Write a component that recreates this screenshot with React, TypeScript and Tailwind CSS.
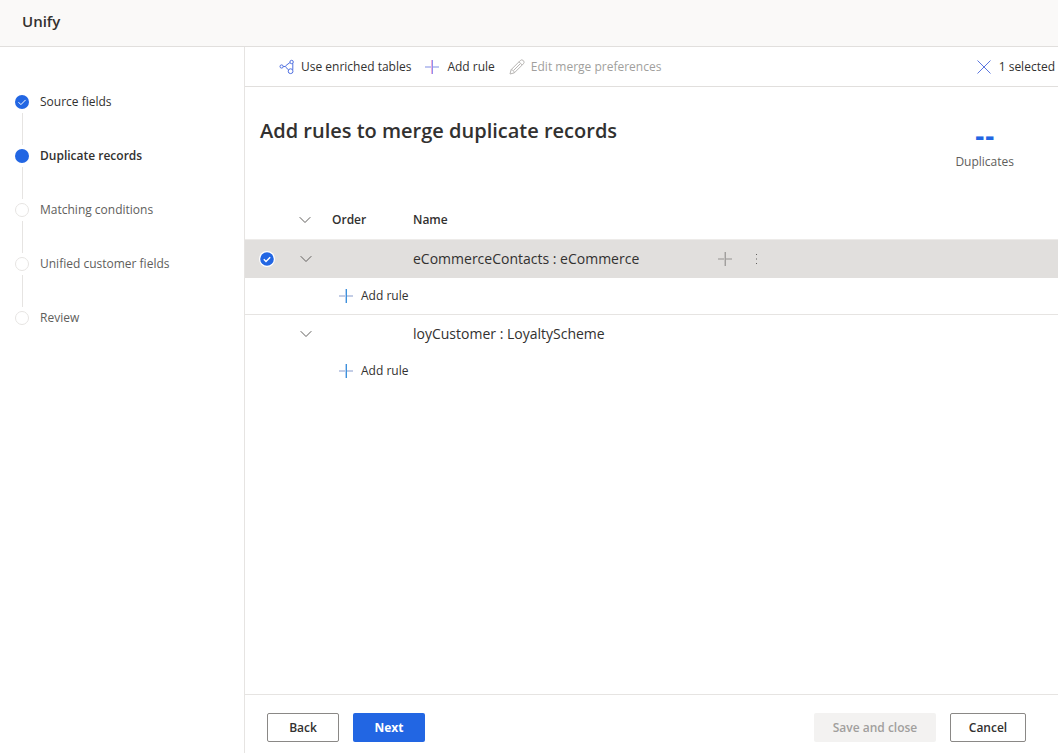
import { useState } from "react";
import clsx from "clsx";

type StepStatus = "done" | "current" | "upcoming";

const steps: { label: string; status: StepStatus }[] = [
  { label: "Source fields", status: "done" },
  { label: "Duplicate records", status: "current" },
  { label: "Matching conditions", status: "upcoming" },
  { label: "Unified customer fields", status: "upcoming" },
  { label: "Review", status: "upcoming" },
];

const tables = [
  { id: "ecommerce", name: "eCommerceContacts : eCommerce" },
  { id: "loyalty", name: "loyCustomer : LoyaltyScheme" },
];

// The upright is drawn as two one-pixel strokes, left then right
function PlusIcon({ bar, left, right }: { bar: string; left: string; right: string }) {
  return (
    <svg viewBox="0 0 14 14" className="block size-3.5 shrink-0" fill="none" aria-hidden="true">
      <path d="M0 7h14" stroke={bar} strokeWidth="2" />
      <path d="M6.5 0v14" stroke={left} />
      <path d="M7.5 0v14" stroke={right} />
    </svg>
  );
}

function ChevronIcon() {
  return (
    <svg viewBox="0 0 12 8" className="h-2 w-3" fill="none" stroke="#605e5c" aria-hidden="true">
      <path d="M0.7 1.2L6 6.5l5.3-5.3" />
    </svg>
  );
}

function EnrichIcon() {
  return (
    <svg viewBox="0 0 16 16" className="size-4 shrink-0" fill="none" stroke="#4f6fe0" aria-hidden="true">
      <circle cx="2.6" cy="7.5" r="1.6" />
      <circle cx="12.6" cy="3" r="1.7" />
      <circle cx="11.6" cy="12.2" r="2.4" />
      <path d="M4.2 7.5h2M10.9 3.6L7.2 6.3a1.6 1.6 0 0 0-.2 2.2l2.6 2.4M13.8 4.4v6.400" />
    </svg>
  );
}

function PencilIcon() {
  return (
    <svg viewBox="0 0 16 16" className="size-4 shrink-0" fill="none" stroke="#b8b6b4" aria-hidden="true">
      <path d="M1 15l1.1-4.3 9.1-9.1a2.2 2.2 0 0 1 3.2 3.2l-9.1 9.1L1 15z" />
      <path d="M2.1 10.7c1.8.2 3 1.4 3.2 3.2M10 2.8l3.2 3.2M11 5L4.5 11.5" />
    </svg>
  );
}

function StepMarker({ status }: { status: StepStatus }) {
  return (
    <svg viewBox="0 0 14 14" className="size-3.5 shrink-0" fill="none" aria-hidden="true">
      {status === "upcoming" ? (
        <circle cx="7" cy="7" r="6.5" stroke="#e6e4e2" />
      ) : (
        <circle cx="7" cy="7" r="7" fill="#2266e3" />
      )}
      {status === "done" && <path d="M3.5 7.2l2.4 2.4 4.7-4.7" stroke="#fff" />}
    </svg>
  );
}

function Steps() {
  return (
    <nav aria-label="Unify steps" className="w-[245px] shrink-0 border-r border-[#e6e4e2] px-[15px] pt-[45px]">
      <ol>
        {steps.map((step, i) => (
          <li key={step.label}>
            <a
              href="#"
              aria-current={step.status === "current" ? "step" : undefined}
              className={clsx(
                "flex h-5 items-center gap-[11px] leading-[22px]",
                step.status === "done" && "text-[#323130]",
                step.status === "current" && "font-semibold text-[#323130]",
                step.status === "upcoming" && "text-[#605e5c]"
              )}
            >
              <StepMarker status={step.status} />
              {step.label}
            </a>
            {i < steps.length - 1 && <div className="my-px ml-[7px] h-8 w-px bg-[#e6e4e2]" />}
          </li>
        ))}
      </ol>
    </nav>
  );
}

export default function App() {
  const [selected, setSelected] = useState("ecommerce");

  return (
    <div className="flex min-h-screen flex-col bg-white font-['Open_Sans','Segoe_UI',sans-serif] text-xs leading-5 text-[#323130]">
      <header className="border-b border-[#e1dfdd] bg-[#faf9f8] px-[22px] pt-[9px] pb-[13px]">
        <h1 className="text-[15px] leading-6 font-semibold">Unify</h1>
      </header>

      <div className="flex flex-1">
        <Steps />

        <main className="flex min-w-0 flex-1 flex-col">
          <div className="flex h-10 items-center gap-3.5 border-b border-[#e1dfdd] pr-[3px] pl-[34px] whitespace-nowrap">
            <button type="button" className="flex items-center gap-1.5">
              <EnrichIcon />
              Use enriched tables
            </button>
            <button type="button" className="flex items-center gap-2">
              <PlusIcon bar="#bfc6f1" left="#eeb0da" right="#8f8ff0" />
              Add rule
            </button>
            <button type="button" disabled className="flex items-center gap-1.5 text-[#a19f9d]">
              <PencilIcon />
              Edit merge preferences
            </button>
            <button type="button" className="ml-auto flex items-center gap-2">
              <svg viewBox="0 0 14 14" className="size-3.5" fill="none" stroke="#5b76e0" aria-hidden="true">
                <path d="M0.5 0.5l13 13M13.5 0.5l-13 13" />
              </svg>
              1 selected
            </button>
          </div>

          <div className="flex justify-between pt-7 pr-11 pl-[15px]">
            <h2 className="text-xl leading-8 font-semibold">Add rules to merge duplicate records</h2>
            <div className="pt-2 text-center">
              <div className="font-['DejaVu_Sans',sans-serif] text-2xl leading-7 font-bold text-[#2266e3]">--</div>
              <div className="leading-[22px] text-[#605e5c]">Duplicates</div>
            </div>
          </div>

          <table className="mt-7 w-full table-fixed border-collapse text-left">
            <colgroup>
              <col className="w-[54px]" />
              <col className="w-[33px]" />
              <col className="w-[81px]" />
              <col className="w-[305px]" />
              <col />
            </colgroup>
            <thead>
              <tr className="h-[38px] border-b border-[#edebe9]">
                <th />
                <th>
                  <button type="button" aria-label="Expand all" className="flex">
                    <ChevronIcon />
                  </button>
                </th>
                <th className="font-semibold">Order</th>
                <th className="font-semibold">Name</th>
                <th />
              </tr>
            </thead>
            {tables.map((table) => {
              const isSelected = table.id === selected;
              return (
                <tbody key={table.id} className="not-last:border-b not-last:border-[#e6e4e2]">
                  <tr
                    className={clsx("h-[39px]", isSelected && "bg-[#e1dfdd]")}
                    onClick={() => setSelected(table.id)}
                  >
                    <td className="pl-3.5">
                      {isSelected && (
                        <label className="block w-4">
                          <input type="checkbox" checked readOnly aria-label={table.name} className="sr-only" />
                          <svg viewBox="0 0 16 16" className="size-4" fill="none" aria-hidden="true">
                            <circle cx="8" cy="8" r="8" fill="#fff" />
                            <circle cx="8" cy="8" r="6.8" fill="#2266e3" />
                            <path d="M4.8 8.2l2.2 2.2 4.2-4.2" stroke="#fff" strokeWidth="1.4" />
                          </svg>
                        </label>
                      )}
                    </td>
                    <td>
                      <button type="button" aria-label={"Expand " + table.name} className="flex pl-px">
                        <ChevronIcon />
                      </button>
                    </td>
                    <td />
                    <td className="text-sm">{table.name}</td>
                    <td>
                      {isSelected && (
                        <div className="flex items-center gap-6">
                          <button type="button" aria-label="Add rule">
                            <PlusIcon bar="#bbb9b7" left="#c4c2c0" right="#a19f9d" />
                          </button>
                          <button type="button" aria-label="More actions">
                            <svg viewBox="0 0 2 10" className="block h-2.5 w-0.5" fill="#605e5c" aria-hidden="true">
                              <path d="M0 0h1v1h-1zM0 4.5h1v1h-1zM0 9h1v1h-1z" />
                            </svg>
                          </button>
                        </div>
                      )}
                    </td>
                  </tr>
                  <tr className="h-9">
                    <td colSpan={5} className="pl-[94px]">
                      <button type="button" className="flex items-center gap-2">
                        <PlusIcon bar="#c3cde6" left="#b5cdf0" right="#3b93dc" />
                        Add rule
                      </button>
                    </td>
                  </tr>
                </tbody>
              );
            })}
          </table>

          <footer className="mt-auto flex h-[59px] gap-3.5 border-t border-[#e6e4e2] pt-[18px] pr-8 pb-[11px] pl-[22px] font-semibold">
            <button type="button" className="w-[72px] rounded-xs border border-[#8a8886]">
              Back
            </button>
            <button type="button" className="w-[72px] rounded-xs bg-[#2266e3] font-bold text-white">
              Next
            </button>
            <button type="button" disabled className="ml-auto w-[122px] rounded-xs bg-[#f3f2f1] text-[#a19f9d]">
              Save and close
            </button>
            <button type="button" className="w-[76px] rounded-xs border border-[#8a8886]">
              Cancel
            </button>
          </footer>
        </main>
      </div>
    </div>
  );
}
